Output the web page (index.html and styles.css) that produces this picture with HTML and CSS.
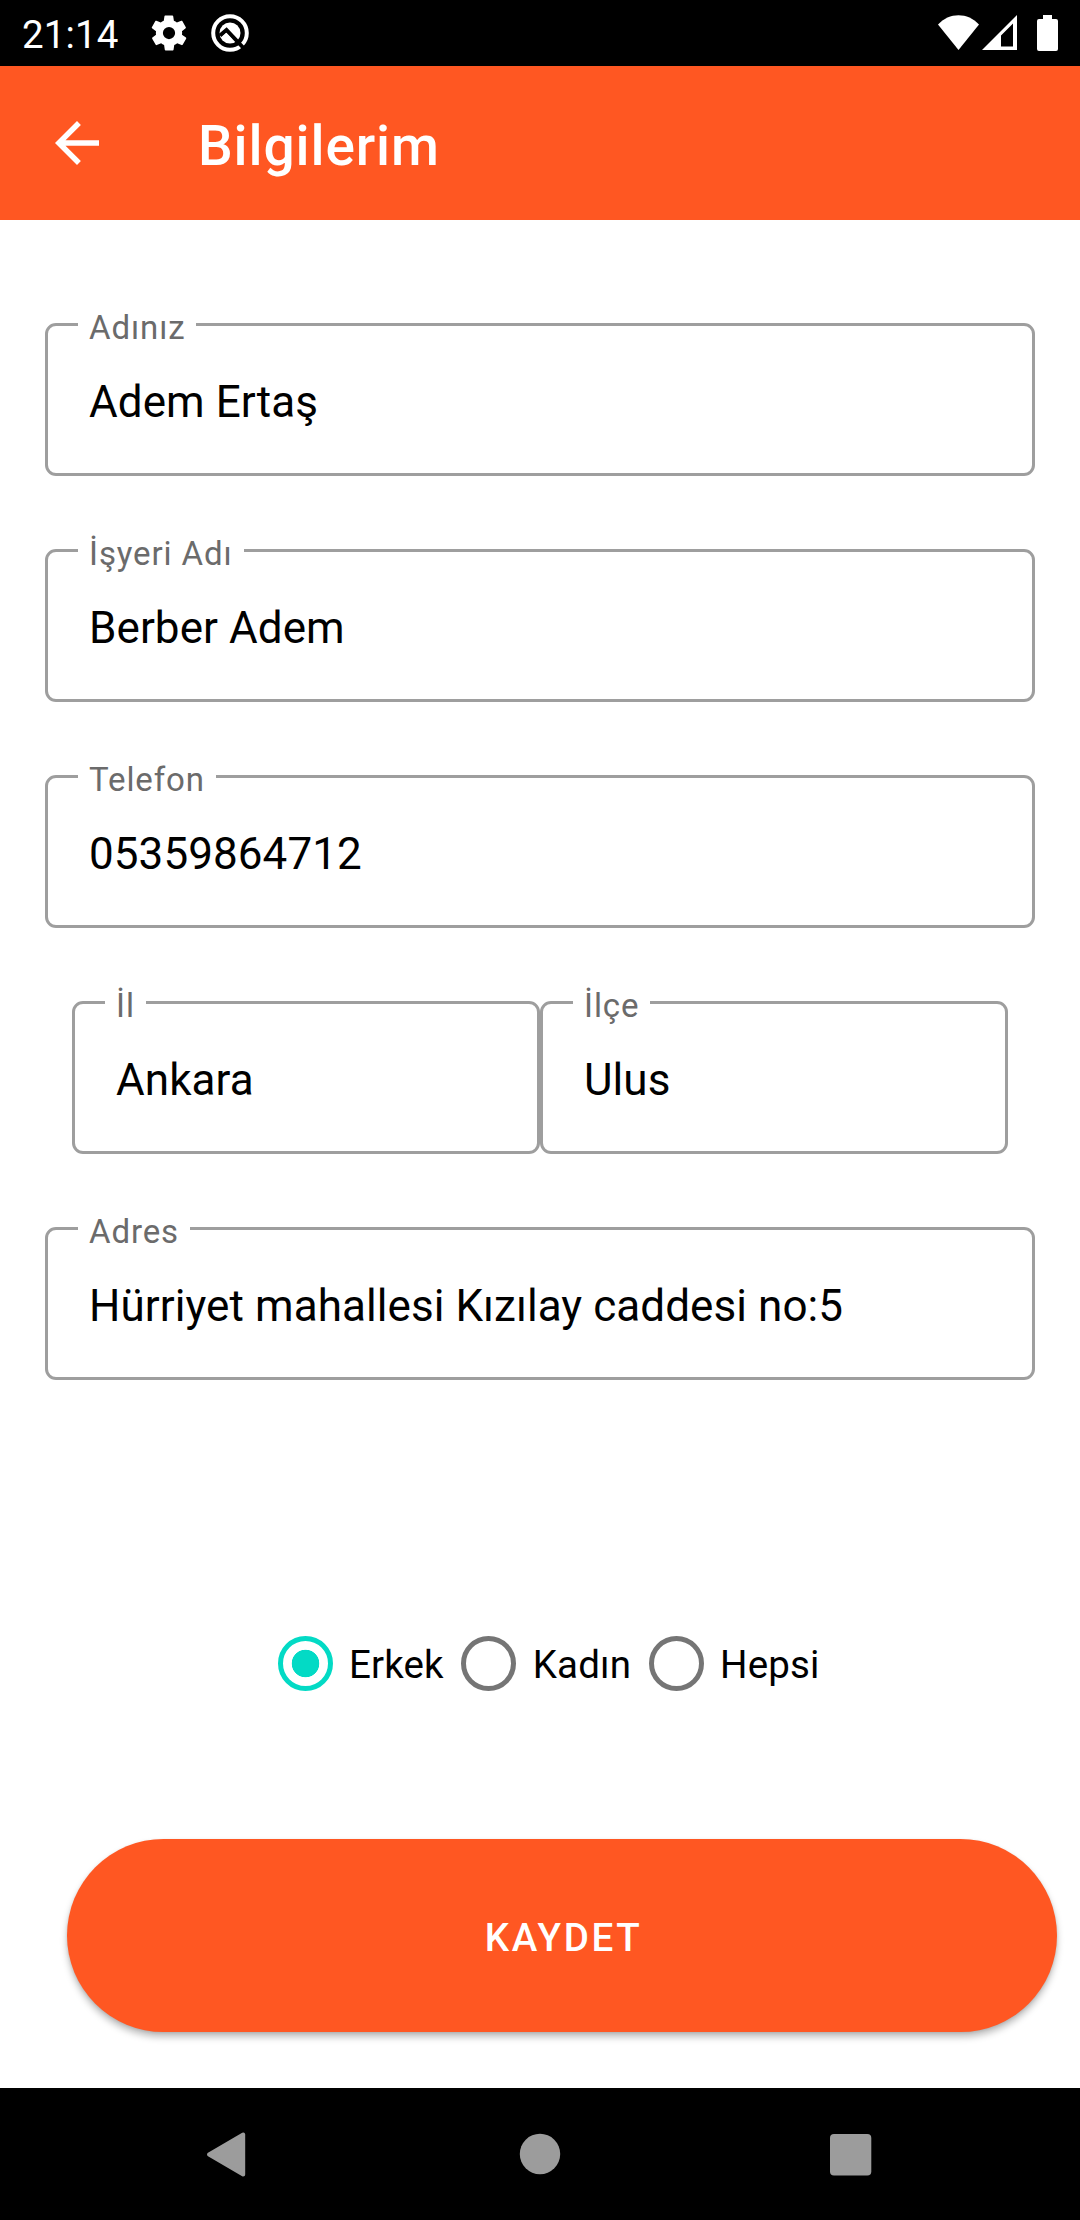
FILE: index.html
```html
<!DOCTYPE html>
<html lang="tr">
<head>
<meta charset="utf-8">
<title>Bilgilerim</title>
<link rel="stylesheet" href="styles.css">
</head>
<body>
<div class="screen">
  <div class="status-bar">
    <span class="clock">21:14</span>
    <svg class="gear" viewBox="0 0 24 24" width="42" height="42"><path fill="#fff" d="M19.4 13c0-.3.1-.6.1-1s0-.7-.1-1l2.1-1.700c.2-.1.2-.4.1-.6l-2-3.500c-.1-.2-.4-.3-.6-.2l-2.500 1c-.5-.4-1.100-.7-1.700-1l-.4-2.600c0-.2-.2-.4-.5-.4h-4c-.2 0-.5.2-.5.4l-.4 2.600c-.6.300-1.200.6-1.700 1l-2.500-1c-.2-.1-.5 0-.6.2l-2 3.500c-.1.2-.1.500.1.600L4.600 11c0 .3-.1.700-.1 1s0 .7.1 1l-2.100 1.600c-.2.200-.2.400-.1.700l2 3.400c.1.200.4.300.6.200l2.500-1c.5.400 1.100.800 1.700 1l.4 2.700c0 .2.200.4.500.4h4c.2 0 .5-.2.500-.4l.4-2.700c.6-.2 1.200-.6 1.700-1l2.500 1c.2.100.5 0 .6-.2l2-3.400c.1-.3.1-.5-.1-.7zM12 15.500a3.500 3.500 0 1 1 0-7 3.500 3.500 0 0 1 0 7z"/></svg>
    <svg class="badge" viewBox="0 0 40 40" width="40" height="40">
      <circle cx="20" cy="20" r="16.800" fill="none" stroke="#fff" stroke-width="4"/>
      <circle cx="20" cy="20" r="10.500" fill="#fff"/>
      <path d="M10 22.500 16.500 17 34 35.500" fill="none" stroke="#000" stroke-width="4"/>
      <path d="M13 25.500 16 22.500 20.500 27" fill="none" stroke="#fff" stroke-width="3.500"/>
    </svg>
    <div class="indicators">
      <svg viewBox="0 0 41 36" width="41" height="36"><path fill="#fff" d="M0 9.500C11-3 30-3 41 9.500L20.500 35z"/></svg>
      <svg class="signal" viewBox="0 0 36 36" width="36" height="36"><path fill="#fff" fill-rule="evenodd" d="M0 35 35 0V35zM19 20.500V31.500H31V8.500z"/></svg>
      <svg class="battery" viewBox="0 0 21 36" width="21" height="36"><path fill="#fff" d="M6 0h9v4h4a2 2 0 0 1 2 2v28a2 2 0 0 1-2 2H2a2 2 0 0 1-2-2V6a2 2 0 0 1 2-2h4z"/></svg>
    </div>
  </div>

  <header class="app-bar">
    <svg viewBox="0 0 24 24" width="66" height="66"><path fill="#fff" d="M20 11H7.830l5.590-5.590L12 4l-8 8 8 8 1.410-1.410L7.830 13H20z"/></svg>
    <h1 class="title">Bilgilerim</h1>
  </header>

  <main class="form">
    <div class="field"><span class="label">Adınız</span><span class="value">Adem Ertaş</span></div>
    <div class="field"><span class="label">İşyeri Adı</span><span class="value">Berber Adem</span></div>
    <div class="field"><span class="label">Telefon</span><span class="value">05359864712</span></div>
    <div class="field-row">
      <div class="field"><span class="label">İl</span><span class="value">Ankara</span></div>
      <div class="field"><span class="label">İlçe</span><span class="value">Ulus</span></div>
    </div>
    <div class="field"><span class="label">Adres</span><span class="value">Hürriyet mahallesi Kızılay caddesi no:5</span></div>

    <div class="radios">
      <div class="radio"><span class="ring checked"></span><span class="radio-text">Erkek</span></div>
      <div class="radio"><span class="ring"></span><span class="radio-text">Kadın</span></div>
      <div class="radio"><span class="ring"></span><span class="radio-text">Hepsi</span></div>
    </div>

    <button class="save" type="button">KAYDET</button>
  </main>

  <nav class="nav-bar">
    <svg viewBox="0 0 46 46" width="46" height="46"><path fill="#9c9c9c" stroke="#9c9c9c" stroke-width="4" stroke-linejoin="round" d="M5 23.500 39.200 3.500V43.500z"/></svg>
    <svg viewBox="0 0 46 46" width="46" height="46"><circle cx="23" cy="23" r="20.200" fill="#9c9c9c"/></svg>
    <svg viewBox="0 0 46 46" width="46" height="46"><rect x="0" y="3" width="41.300" height="41.500" rx="4" fill="#9c9c9c"/></svg>
  </nav>
</div>
</body>
</html>
```
FILE: styles.css
```css
* { box-sizing: border-box; }
body { margin: 0; background: #fff; font-family: Roboto, "Liberation Sans", sans-serif; }
svg { display: block; flex: none; }

.screen { width: 1080px; height: 2220px; display: flex; flex-direction: column; }

.status-bar { height: 66px; background: #000; color: #fff; display: flex; align-items: center; padding: 0 22px; }
.clock { width: 125.5px; font-size: 38.5px; line-height: 46px; padding-top: 3px; letter-spacing: 0.1px; }
.badge { margin-left: 20px; }
.indicators { display: flex; margin-left: auto; }
.signal { margin-left: 3px; }
.battery { margin-left: 19px; }

.app-bar { height: 154px; background: #ff5722; color: #fff; display: flex; align-items: center; padding-left: 44px; }
.title { margin: 0 0 0 88px; padding-top: 6px; font-size: 55px; line-height: 64px; font-weight: 500; letter-spacing: 0.9px; }

.form { flex: 1; display: flex; flex-direction: column; padding: 103px 45px 0; }
.field { position: relative; flex: none; height: 153px; margin-bottom: 73px; border: 3px solid #9e9e9e; border-radius: 11px; display: flex; align-items: center; padding: 5px 41px 0; }
.label { position: absolute; left: 30px; top: -18px; padding: 0 11px; background: #fff; color: #6b6b6b; font-size: 33px; line-height: 40px; letter-spacing: 0.9px; white-space: nowrap; }
.value { font-size: 44px; line-height: 52px; color: #000; white-space: nowrap; letter-spacing: 0.07px; }
.field-row { display: flex; padding: 0 27px; }
.field-row .field { flex: 1; }

.radios { display: flex; padding-left: 232.5px; margin-top: 182px; }
.radio { display: flex; align-items: center; height: 56px; }
.ring { width: 55px; height: 55px; border: 5.5px solid #757575; border-radius: 50%; }
.ring.checked { border-color: #03dac5; background: radial-gradient(circle, #03dac5 13.400px, transparent 14.100px); }
.radio-text { font-size: 38.5px; line-height: 46px; padding-top: 4px; margin: 0 17.5px 0 16.5px; letter-spacing: 0.15px; }

.save { flex: none; width: 990px; height: 193px; margin: 148px 0 0 22px; border: 0; border-radius: 97px; background: #ff5722; color: #fff; font: 500 38.5px/46px Roboto, sans-serif; letter-spacing: 2.6px; padding: 4px 0 0 3px; box-shadow: 0 5px 7px rgba(0, 0, 0, 0.26), 0 1px 3px rgba(0, 0, 0, 0.1); }

.nav-bar { height: 132px; background: #000; display: flex; align-items: center; justify-content: space-between; padding: 0 204px; }
```
